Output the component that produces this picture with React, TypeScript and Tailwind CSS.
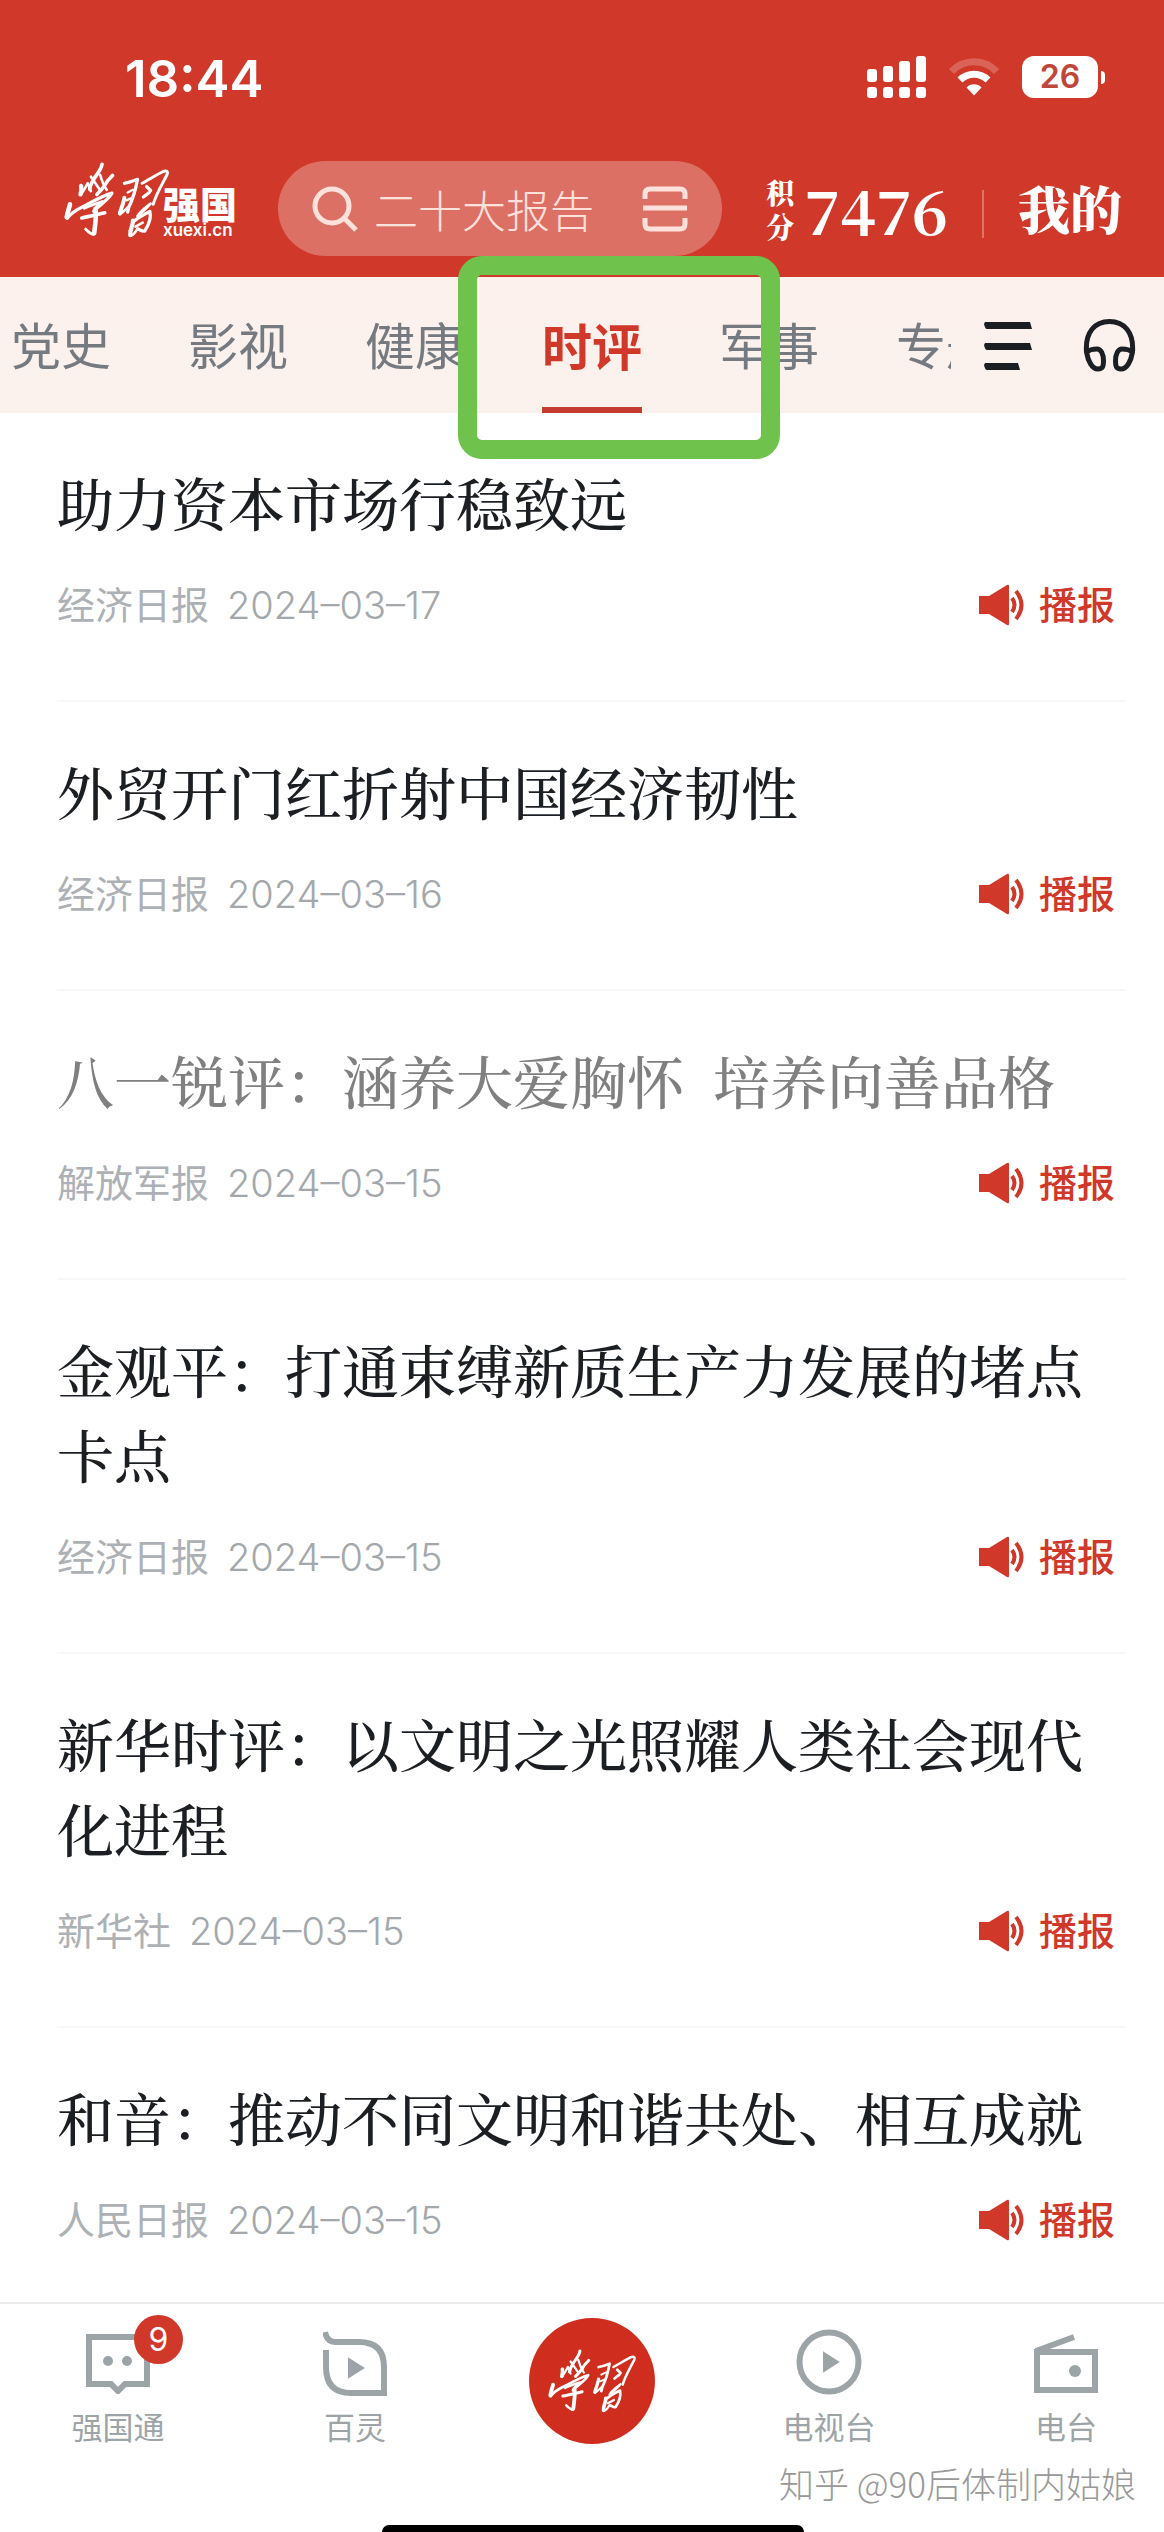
import React from "react";

const serif = "font-['Noto_Serif_CJK_SC','Source_Han_Serif_SC','Liberation_Serif','Noto_Sans_CJK_SC',serif]";

const articles = [
  { title: "助力资本市场行稳致远", source: "经济日报", date: "2024–03–17", read: false },
  { title: "外贸开门红折射中国经济韧性", source: "经济日报", date: "2024–03–16", read: false },
  { title: "八一锐评：涵养大爱胸怀  培养向善品格", source: "解放军报", date: "2024–03–15", read: true },
  { title: "金观平：打通束缚新质生产力发展的堵点卡点", source: "经济日报", date: "2024–03–15", read: false },
  { title: "新华时评：以文明之光照耀人类社会现代化进程", source: "新华社", date: "2024–03–15", read: false },
  { title: "和音：推动不同文明和谐共处、相互成就", source: "人民日报", date: "2024–03–15", read: false },
];

const tabs = ["党史", "影视", "健康", "时评", "军事", "专题"];

/* Brush-script mark of the app */
function Calligraphy({ className }: { className: string }) {
  return (
    <svg viewBox="64 56 328 238" className={className} fill="none" stroke="currentColor" strokeLinecap="round" strokeLinejoin="round" aria-hidden="true">
      <path strokeWidth="11" d="M184 66 C182 80 172 92 162 106 C154 118 148 130 146 142" />
      <path strokeWidth="8" d="M150 104 C158 116 168 130 176 142" />
      <path strokeWidth="13" d="M120 132 C122 140 120 150 118 158" />
      <path strokeWidth="8" d="M120 158 C128 146 134 136 140 124 L150 148" />
      <path strokeWidth="11" d="M216 100 C210 108 200 114 196 124 C190 136 180 146 168 158" />
      <path strokeWidth="8" d="M178 98 C182 112 190 132 198 144" />
      <path strokeWidth="14" d="M86 188 C84 200 78 212 76 228" />
      <path strokeWidth="10" d="M78 230 C90 212 110 202 136 190 C162 176 190 160 214 154 C208 168 188 182 170 198" />
      <path strokeWidth="9" d="M130 200 C148 192 166 186 184 180 C174 190 162 198 158 210" />
      <path strokeWidth="11" d="M122 230 C142 226 166 220 192 214" />
      <path strokeWidth="14" d="M164 202 C168 226 162 252 160 276" />
      <path strokeWidth="9" d="M158 280 C150 280 142 272 134 264" />
      <path strokeWidth="12" d="M252 168 C250 184 242 200 238 216" />
      <path strokeWidth="8" d="M238 218 C248 212 258 202 268 192" />
      <path strokeWidth="10" d="M252 124 C266 122 282 116 292 112 C288 134 280 168 266 196 L262 212" />
      <path strokeWidth="7" d="M262 152 L278 144 M258 176 L272 170" />
      <path strokeWidth="9" d="M306 124 C328 112 350 98 370 88 C382 84 386 88 382 98 C366 130 348 158 340 188" />
      <path strokeWidth="10" d="M320 134 L332 146 M310 166 L328 152" />
      <path strokeWidth="8" d="M296 218 C306 206 318 196 332 186 C322 200 306 212 292 224" />
      <path strokeWidth="13" d="M278 238 C280 252 268 264 270 282" />
      <path strokeWidth="8" d="M272 284 C282 280 288 270 292 262" />
      <path strokeWidth="10" d="M280 240 C294 230 312 218 330 210 C334 228 326 252 314 270 C306 272 300 266 294 264" />
      <path strokeWidth="8" d="M286 256 L308 244" />
    </svg>
  );
}

function StatusBar() {
  return (
    <div className="flex h-[98px] items-end justify-between pr-[59px] pl-[125px]">
      <time className="font-[Inter] text-[51px] leading-[38px] font-semibold">18:44</time>
      <div className="flex h-[42px] items-center">
        <svg width="60" height="42" viewBox="0 0 60 42" fill="currentColor" aria-label="信号">
          <rect x="0" y="13" width="10" height="13" rx="3" />
          <rect x="16" y="10" width="10" height="16" rx="3" />
          <rect x="32" y="5" width="11" height="21" rx="3" />
          <rect x="49" y="0" width="10" height="26" rx="3" />
          <rect x="0" y="31" width="10" height="11" rx="3" />
          <rect x="16" y="31" width="10" height="11" rx="3" />
          <rect x="32" y="31" width="11" height="11" rx="3" />
          <rect x="49" y="31" width="10" height="11" rx="3" />
        </svg>
        <svg className="ml-[22px]" width="50" height="40" viewBox="0 0 50 40" fill="none" stroke="currentColor" aria-label="无线网络">
          <path d="M2.500 14.500 A31 31 0 0 1 47.500 14.500" strokeWidth="7" opacity="0.22" />
          <path d="M11 23 A20 20 0 0 1 39 23" strokeWidth="7" />
          <path d="M17.500 30.500 A10.500 10.500 0 0 1 32.500 30.500 L25 38.500 Z" fill="currentColor" stroke="none" />
        </svg>
        <span className="ml-[23px] flex h-[42px] w-[76px] items-center justify-center rounded-xl bg-white font-[Inter] text-[32px] leading-none font-semibold text-[#c0453a]">26</span>
        <span className="ml-[3px] h-[13px] w-1 rounded-r-full bg-white" />
      </div>
    </div>
  );
}

function Header() {
  return (
    <header className="bg-[#d03829] text-white">
      <StatusBar />
      <div className="flex h-[179px] items-start pt-[63px] pr-[42px] pl-[62px]">
        <a href="#home" aria-label="学习强国" className="flex h-[78px] w-[172px] shrink-0 items-end">
          <Calligraphy className="h-[78px] w-[109px] shrink-0 self-start" />
          <span className="-ml-2 flex w-[74px] shrink-0 flex-col">
            <span className="font-['Noto_Sans_CJK_SC',sans-serif] text-[37px] leading-[36px] font-black">强国</span>
            <span className="font-[Inter] text-[17px] leading-[18px] font-semibold">xuexi.cn</span>
          </span>
        </a>
        <div className="ml-11 flex h-[95px] min-w-0 flex-1 items-center rounded-full bg-white/28 pr-[34px] pl-[34px] text-[#ffe1dc]">
          <svg width="46" height="46" viewBox="0 0 46 46" fill="none" stroke="currentColor" strokeWidth="5" className="shrink-0" aria-hidden="true">
            <circle cx="20" cy="20" r="17" />
            <path d="M32 32 L44 44" />
          </svg>
          <input
            aria-label="搜索"
            defaultValue="二十大报告"
            className="ml-4 h-16 min-w-0 flex-1 bg-transparent font-['Noto_Sans_CJK_SC',sans-serif] text-[44px] font-light outline-none"
          />
          <button aria-label="扫一扫" className="shrink-0">
            <svg width="46" height="46" viewBox="0 0 46 46" fill="none" stroke="currentColor" strokeWidth="5">
              <path d="M3 13 V8 Q3 3 8 3 H38 Q43 3 43 8 V13 M3 32 V38 Q3 43 8 43 H38 Q43 43 43 38 V32 M1 22 H45" />
            </svg>
          </button>
        </div>
        <a href="#points" className={`ml-[44px] flex h-[95px] shrink-0 items-center ${serif} font-black`}>
          <span className="flex w-[38px] flex-col text-[28px] leading-[34px]">
            <span>积</span>
            <span>分</span>
          </span>
          <span className="text-[61px] leading-[92px] font-bold">7476</span>
        </a>
        <span className="mt-[29px] ml-[34px] h-[48px] w-[2px] shrink-0 bg-white/30" />
        <a href="#mine" className={`ml-[34px] shrink-0 ${serif} text-[52px] leading-[93px] font-black`}>我的</a>
      </div>
    </header>
  );
}

function TabBar() {
  return (
    <nav className="relative flex h-[136px] bg-linear-to-b from-[#fdf1ec] to-[#faf1ed] font-['Noto_Sans_CJK_SC',sans-serif]">
      <div className="mr-[33px] flex min-w-0 flex-1 gap-[77px] overflow-hidden pl-[11px]">
        {tabs.map((tab) => (
          <button
            key={tab}
            aria-current={tab === "时评" ? "page" : undefined}
            className={
              tab === "时评"
                ? "h-[136px] w-[100px] shrink-0 border-b-6 border-[#c73c30] pt-1 text-[50px] leading-none font-bold whitespace-nowrap text-[#d03829]"
                : "h-[136px] w-[100px] shrink-0 pb-1 text-[50px] leading-none whitespace-nowrap text-[#757a80]"
            }
          >
            {tab}
          </button>
        ))}
      </div>
      <button aria-label="全部频道" className="shrink-0 text-[#1b1e22]">
        <svg width="48" height="50" viewBox="0 0 48 50" fill="currentColor">
          <path d="M1 2 H46 L48 9 H3 Q1 9 0 4 Z M1 23 H46 L48 30 H3 Q1 30 0 25 Z M1 43 H34 L36 50 H3 Q1 50 0 45 Z" />
        </svg>
      </button>
      <button aria-label="听新闻" className="mr-[28px] ml-[51px] shrink-0 text-[#1b1e22]">
        <svg width="53" height="54" viewBox="0 0 53 54" fill="none" stroke="currentColor" strokeWidth="5" strokeLinejoin="round">
          <path d="M3.500 34 C2 14 12 3.500 26.500 3.500 C41 3.500 51 14 49.500 34" />
          <path d="M3.500 34 C5 43 9 51 15 51 C20 51 20.500 48 20.500 43 C20.500 36 18 31 14 31 C9.500 31 6 32 3.500 34 Z" />
          <path d="M49.500 34 C48 43 44 51 38 51 C33 51 32.500 48 32.500 43 C32.500 36 35 31 39 31 C43.500 31 47 32 49.500 34 Z" />
        </svg>
      </button>
      <span className="pointer-events-none absolute -top-[21px] left-[458px] h-[203px] w-[322px] rounded-3xl border-[19px] border-[#6fc24c]" />
    </nav>
  );
}

function Speaker() {
  return (
    <svg width="46" height="42" viewBox="0 0 46 42" fill="currentColor" aria-hidden="true">
      <path d="M0 12 H10 L28 1 Q30 0 30 2 V40 Q30 42 28 41 L10 30 H0 Z" />
      <path d="M33 14 Q38 21 33 28" fill="none" stroke="currentColor" strokeWidth="4" />
      <path d="M37 7 Q48 21 37 35" fill="none" stroke="currentColor" strokeWidth="4" />
    </svg>
  );
}

function ArticleList() {
  return (
    <main className="pr-[38px] pl-[57px]">
      {articles.map((a) => (
        <article key={a.title} className="border-b-2 border-[#f7f7f7] pt-[46px] pb-[68px] last:border-b-0 last:pb-[55px]">
          <h2 className={a.read ? `${serif} pr-9 text-[57px] leading-[85px] font-medium whitespace-pre-wrap text-[#808080]` : `${serif} pr-9 text-[57px] leading-[85px] font-medium whitespace-pre-wrap text-[#1b1e22]`}>
            <a href="#article">{a.title}</a>
          </h2>
          <div className="mt-[34px] flex h-[54px] items-center pr-[11px] font-[Inter,'Noto_Sans_CJK_SC',sans-serif] text-[38px]">
            <span className="font-normal text-[#adb1b5]">{a.source}</span>
            <time className="ml-[18px] font-light text-[#a3a8ac]">{a.date}</time>
            <button className="ml-auto flex items-center gap-[14px] font-medium text-[#d03829]">
              <Speaker />
              播报
            </button>
          </div>
        </article>
      ))}
    </main>
  );
}

function NavItem({ label, children }: { label: string; children: React.ReactNode }) {
  return (
    <a href={`#${label}`} className="flex w-[140px] flex-col items-center text-[#9da4a8]">
      <span className="relative mt-[27px] flex h-[66px] items-center">{children}</span>
      <span className="mt-[6px] text-[31px] leading-[46px]">{label}</span>
    </a>
  );
}

function BottomNav() {
  return (
    <footer className="relative h-[230px] overflow-hidden border-t-2 border-[#ececee] bg-white font-['Noto_Sans_CJK_SC',sans-serif]">
      <nav className="flex items-start justify-between pr-7 pl-12">
        <NavItem label="强国通">
          <svg width="64" height="60" viewBox="0 0 64 60" fill="none" stroke="currentColor" strokeWidth="6" aria-hidden="true">
            <path d="M3 3 H61 V50 H39 L32 57 L25 50 H3 Z" />
            <circle cx="22" cy="27" r="5" fill="currentColor" stroke="none" />
            <circle cx="41" cy="27" r="5" fill="currentColor" stroke="none" />
          </svg>
          <span className="absolute -top-4 left-[48px] flex size-[49px] items-center justify-center rounded-full bg-[#d03829] font-[Inter] text-[32px] leading-none text-white">9</span>
        </NavItem>
        <NavItem label="百灵">
          <svg width="64" height="66" viewBox="0 0 64 66" fill="none" stroke="currentColor" strokeWidth="6" aria-hidden="true">
            <path d="M2 1 Q4 11 12 11 H36 Q61 11 61 36 V62 H28 Q3 62 3 36 V19" />
            <path d="M26 28 L40 37 L26 46 Z" fill="currentColor" strokeWidth="2" />
          </svg>
        </NavItem>
        <a href="#study" aria-label="学习" className="mt-[14px] flex w-[140px] justify-center">
          <span className="flex size-[126px] items-center justify-center rounded-full bg-[#cf2e1f] text-white">
            <Calligraphy className="h-[66px] w-[90px]" />
          </span>
        </a>
        <NavItem label="电视台">
          <svg width="66" height="66" viewBox="0 0 66 66" fill="none" stroke="currentColor" strokeWidth="6" className="-mt-1" aria-hidden="true">
            <circle cx="33" cy="33" r="29.500" />
            <path d="M28 24 L42 33 L28 42 Z" fill="currentColor" strokeWidth="2" />
          </svg>
        </NavItem>
        <NavItem label="电台">
          <svg width="64" height="60" viewBox="0 0 64 60" fill="none" stroke="currentColor" strokeWidth="6" aria-hidden="true">
            <path d="M3 18 H61 V56 H3 Z" />
            <path d="M2 17 L40 3" />
            <circle cx="41" cy="37" r="6" fill="currentColor" stroke="none" />
          </svg>
        </NavItem>
      </nav>
      <p className="absolute right-[28px] bottom-6 text-[35px] leading-[50px] font-light text-[#999999]">知乎 @90后体制内姑娘</p>
      <span className="absolute bottom-0 left-[382px] h-[7px] w-[422px] rounded-t-lg bg-black" />
    </footer>
  );
}

export default function App() {
  return (
    <div className="w-full bg-white">
      <Header />
      <TabBar />
      <ArticleList />
      <BottomNav />
    </div>
  );
}
